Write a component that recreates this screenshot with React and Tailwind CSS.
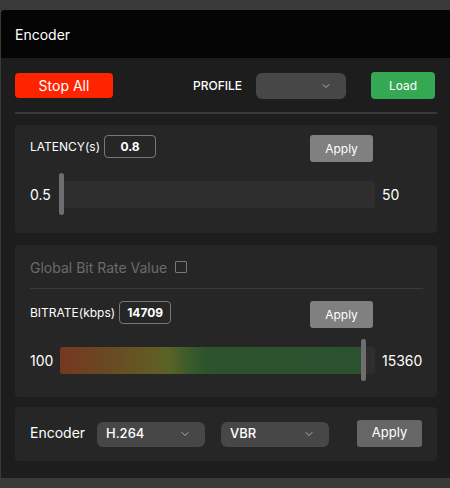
import React, { useState } from 'react';
import { ChevronDown } from 'lucide-react';

function Select({ value, width }) {
  return (
    <div className={`${width} h-[25px] bg-[#474747] rounded-md flex items-center justify-between pl-[9px] pr-[14px]`}>
      <span className="text-[13px] font-medium text-white">{value}</span>
      <ChevronDown size={12} strokeWidth={1.5} className="text-[#d0d0d0]" />
    </div>
  );
}

function Slider({ min, max, value, gradient }) {
  const pct = ((value - min) / (max - min)) * 100;
  return (
    <div className="flex items-center">
      <span className="w-[30px] text-[14px] text-white">{min}</span>
      <div className="relative w-[315px] h-[42px] flex items-center">
        <div className="w-full h-[27px] bg-[#2e2e2e] rounded-[3px] overflow-hidden">
          {gradient && (
            <div
              className="h-full bg-[linear-gradient(to_right,#76381f_0%,#6a4722_14%,#625a22_30%,#5a6326_36%,#3a5a2a_43%,#2c532e_49%,#2b522e_100%)]"
              style={{ width: `${pct}%` }}
            />
          )}
        </div>
        <div
          className="absolute top-0 h-[42px] w-[5px] bg-[#6e6e6e] rounded-[3px]"
          style={{ left: `calc(${pct}% - 1px)` }}
        />
      </div>
      <span className="ml-[7px] text-[14px] text-white">{max}</span>
    </div>
  );
}

function ValueRow({ label, value, boxWidth }) {
  return (
    <div className="flex items-start">
      <div className="h-[23px] flex items-center text-[12px] text-white">{label}</div>
      <div className={`${boxWidth} ml-[4px] h-[23px] border border-[#777] rounded-[4px] flex items-center justify-center text-[12px] font-bold text-white`}>
        {value}
      </div>
    </div>
  );
}

function ApplyRow({ children }) {
  return (
    <div className="w-[343px] flex items-start justify-between">
      {children}
      <button className="w-[63px] h-[27px] bg-[#808080] rounded-[3px] text-[12px] text-white">Apply</button>
    </div>
  );
}

export default function App() {
  const [latency] = useState(0.8);
  const [bitrate] = useState(14709);

  return (
    <div className="w-[450px] h-[488px] bg-[#3a3a3a] pt-[10px] pl-[1px] font-['Inter','Liberation_Sans',sans-serif]">
      <div className="w-[449px] h-[468px] bg-[#1d1d1d] rounded-tl-[4px] overflow-hidden">
        <div className="h-[48px] bg-[#050505] flex items-center px-[14px] text-[14px] text-white">Encoder</div>

        <div className="px-[14px] pr-[13px]">
          <div className="flex items-center mt-[14px] h-[27px]">
            <button className="w-[98px] h-[25px] bg-[#ff2400] rounded-[4px] text-[14px] text-white">Stop All</button>
            <span className="ml-[80px] text-[12px] font-medium text-white">PROFILE</span>
            <div className="ml-[14px]">
              <div className="w-[90px] h-[26px] bg-[#474747] rounded-md flex items-center justify-end pr-[14px]">
                <ChevronDown size={12} strokeWidth={1.5} className="text-[#d0d0d0]" />
              </div>
            </div>
            <button className="ml-[25px] w-[64px] h-[27px] bg-[#34a853] rounded-[4px] text-[12px] text-white">Load</button>
          </div>

          <div className="mt-[13px] h-[2px] bg-[#3a3a3a]" />

          <div className="mt-[11px] bg-[#262626] rounded-[4px] pl-[15px] pt-[10px] pb-[18px]">
            <ApplyRow>
              <ValueRow label="LATENCY(s)" value={latency} boxWidth="w-[52px]" />
            </ApplyRow>
            <div className="mt-[11px]">
              <Slider min={0.5} max={50} value={0.5} />
            </div>
          </div>

          <div className="mt-[12px] bg-[#262626] rounded-[4px] pl-[15px] pr-[14px] pt-[13px] pb-[16px]">
            <div className="flex items-center h-[18px]">
              <span className="text-[14px] text-[#6b6b6b]">Global Bit Rate Value</span>
              <span className="ml-[8px] w-[12px] h-[12px] border border-[#777] rounded-[1px]" />
            </div>
            <div className="mt-[12px] h-px bg-[#3a3a3a]" />
            <div className="mt-[12px]">
              <ApplyRow>
                <ValueRow label="BITRATE(kbps)" value={bitrate} boxWidth="w-[52px]" />
              </ApplyRow>
            </div>
            <div className="mt-[11px]">
              <Slider min={100} max={15360} value={bitrate} gradient />
            </div>
          </div>

          <div className="mt-[10px] h-[54px] bg-[#262626] rounded-[4px] pl-[15px] flex items-center">
            <span className="w-[67px] text-[14px] text-white -mt-[3px]">Encoder</span>
            <Select value="H.264" width="w-[108px]" />
            <div className="ml-[16px]">
              <Select value="VBR" width="w-[108px]" />
            </div>
            <button className="ml-[28px] -mt-[2px] w-[65px] h-[27px] bg-[#666666] rounded-[3px] text-[13px] text-white">Apply</button>
          </div>
        </div>
      </div>
    </div>
  );
}
